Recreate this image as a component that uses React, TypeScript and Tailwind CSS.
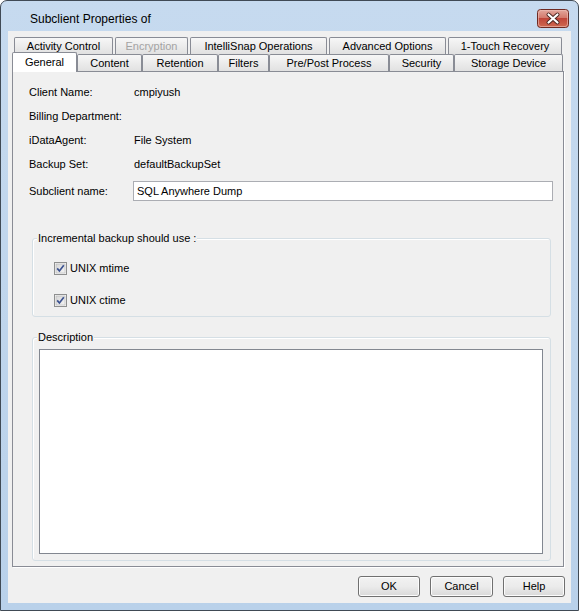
import React from "react";

const row1 = [
  { label: "Activity Control", w: "w-[99px]" },
  { label: "Encryption", w: "w-[73px]", disabled: true },
  { label: "IntelliSnap Operations", w: "w-[137px]" },
  { label: "Advanced Options", w: "w-[117px]" },
  { label: "1-Touch Recovery", w: "w-[114px]" },
];

const row2 = [
  { label: "Content", w: "w-[65px]" },
  { label: "Retention", w: "w-[76px]" },
  { label: "Filters", w: "w-[51px]" },
  { label: "Pre/Post Process", w: "w-[120px]" },
  { label: "Security", w: "w-[65px]" },
  { label: "Storage Device", w: "w-[109px]" },
];

function Tab({ label, w, disabled }: { label: string; w: string; disabled?: boolean }) {
  return (
    <div
      className={`${w} h-[17px] shrink-0 border border-b-0 border-[#898c95] rounded-t-[2px] bg-linear-to-b from-[#f7f7f7] to-[#e1e1e1] flex items-center justify-center text-[11px] leading-none whitespace-nowrap ${
        disabled ? "text-[#a3a3a3]" : "text-black"
      }`}
    >
      {label}
    </div>
  );
}

function Check({ label }: { label: string }) {
  return (
    <div className="flex items-center h-[16px] gap-[3px]">
      <svg width="13" height="13" viewBox="0 0 13 13">
        <defs>
          <linearGradient id="cb" x1="0" y1="0" x2="1" y2="1">
            <stop offset="0" stopColor="#d6d6d6" />
            <stop offset="1" stopColor="#f4f4f4" />
          </linearGradient>
        </defs>
        <rect x="0.5" y="0.5" width="12" height="12" fill="#f4f4f4" stroke="#8e8f8f" />
        <rect x="2" y="2" width="9" height="9" fill="url(#cb)" stroke="#b5b5b5" strokeWidth="0.6" />
        <path d="M3.2 6.4 L5.4 9 L9.8 3.3" fill="none" stroke="#3c5290" strokeWidth="1.7" />
      </svg>
      <span className="text-[11px] leading-[16px]">{label}</span>
    </div>
  );
}

function Button({ label, w }: { label: string; w: string }) {
  return (
    <div
      className={`${w} h-[21px] rounded-[3px] border border-[#707070] bg-linear-to-b from-[#f2f2f2] via-[#ebebeb] to-[#d9d9d9] flex items-center justify-center text-[11px] leading-none shadow-[inset_0_0_0_1px_#fcfcfc]`}
    >
      {label}
    </div>
  );
}

export default function App() {
  return (
    <div className="w-[579px] h-[611px] font-['Liberation_Sans',Arial,sans-serif] text-black">
      <div className="w-full h-full flex flex-col rounded-t-[7px] border border-[#404a55] bg-linear-to-b from-[#c6daef] to-[#b9d1ea]">
        {/* Title bar */}
        <div className="h-[30px] shrink-0 flex items-start">
          <div className="pl-[29px] pt-[10px] text-[12px] leading-[16px] text-black flex-1">
            Subclient Properties of
          </div>
          <div className="mt-[8px] mr-[9px]">
            <svg width="32" height="19" viewBox="0 0 32 19">
              <defs>
                <linearGradient id="cl" x1="0" y1="0" x2="0" y2="1">
                  <stop offset="0" stopColor="#e3a99f" />
                  <stop offset="0.45" stopColor="#d47a6d" />
                  <stop offset="0.5" stopColor="#c0463a" />
                  <stop offset="1" stopColor="#cf6a52" />
                </linearGradient>
              </defs>
              <rect x="0.5" y="0.5" width="31" height="18" rx="3" fill="url(#cl)" stroke="#6e2a22" />
              <rect x="1.5" y="1.5" width="29" height="16" rx="2.5" fill="none" stroke="#efc2b9" strokeOpacity="0.6" />
              <path d="M11.5 5.5 L20.5 13.5 M20.5 5.5 L11.5 13.5" stroke="#4a2520" strokeWidth="4" strokeLinecap="round" />
              <path d="M11.5 5.5 L20.5 13.5 M20.5 5.5 L11.5 13.5" stroke="#ffffff" strokeWidth="2.2" strokeLinecap="round" />
            </svg>
          </div>
        </div>

        {/* Client area */}
        <div className="mx-[7px] mb-[7px] flex-1 flex flex-col bg-[#f0f0f0]">
          {/* Tabs */}
          <div className="px-[4px] pt-[6px] shrink-0">
            <div className="flex gap-[2px] ml-[2px] h-[17px]">
              {row1.map((t) => (
                <Tab key={t.label} label={t.label} w={t.w} disabled={t.disabled} />
              ))}
            </div>
            <div className="relative z-10 flex items-end h-[18px] -mb-px">
              <div className="w-[65px] h-[20px] shrink-0 border border-b-0 border-[#898c95] rounded-t-[2px] bg-white flex items-start justify-center pt-[3px] text-[11px] leading-[13px]">
                General
              </div>
              {row2.map((t) => (
                <div key={t.label} className="mb-px">
                  <Tab label={t.label} w={t.w} />
                </div>
              ))}
            </div>
          </div>

          {/* Panel */}
          <div className="mx-[4px] mr-[7px] flex-1 flex flex-col border border-[#898c95] bg-[#f0f0f0] shadow-[1px_1px_0_#ffffff] pl-[16px] pr-[10px] pt-[8px] pb-[5px] text-[11px] leading-[16px]">
            {[
              ["Client Name:", "cmpiyush"],
              ["Billing Department:", ""],
              ["iDataAgent:", "File System"],
              ["Backup Set:", "defaultBackupSet"],
            ].map(([k, v]) => (
              <div key={k} className="flex items-center h-[24px]">
                <div className="w-[105px]">{k}</div>
                <div>{v}</div>
              </div>
            ))}
            <div className="flex items-center h-[20px] mt-[5px]">
              <div className="w-[104px]">Subclient name:</div>
              <div className="flex-1 h-[20px] border border-[#abadb3] bg-white flex items-center pl-[3px]">
                SQL Anywhere Dump
              </div>
            </div>

            {/* Incremental group */}
            <div className="relative mt-[37px] ml-[3px] mr-[2px] h-[79px] border border-[#d5dfe5] rounded-[3px] shadow-[inset_1px_1px_0_#ffffff] pl-[21px] pt-[21px]">
              <div className="absolute -top-[9px] left-[4px] px-[1px] bg-[#f0f0f0] leading-[16px]">
                Incremental backup should use :
              </div>
              <Check label="UNIX mtime" />
              <div className="mt-[16px]">
                <Check label="UNIX ctime" />
              </div>
            </div>

            {/* Description group */}
            <div className="relative mt-[20px] ml-[3px] mr-[2px] flex-1 flex flex-col border border-[#d5dfe5] rounded-[3px] shadow-[inset_1px_1px_0_#ffffff] pl-[6px] pr-[7px] pt-[11px] pb-[6px]">
              <div className="absolute -top-[9px] left-[4px] px-[1px] bg-[#f0f0f0] leading-[16px]">
                Description
              </div>
              <div className="flex-1 border border-[#828790] bg-white" />
            </div>
          </div>

          {/* Buttons */}
          <div className="shrink-0 flex justify-end gap-[10px] pr-[6px] pt-[9px] pb-[6px]">
            <Button label="OK" w="w-[62px]" />
            <Button label="Cancel" w="w-[63px]" />
            <Button label="Help" w="w-[62px]" />
          </div>
        </div>
      </div>
    </div>
  );
}
